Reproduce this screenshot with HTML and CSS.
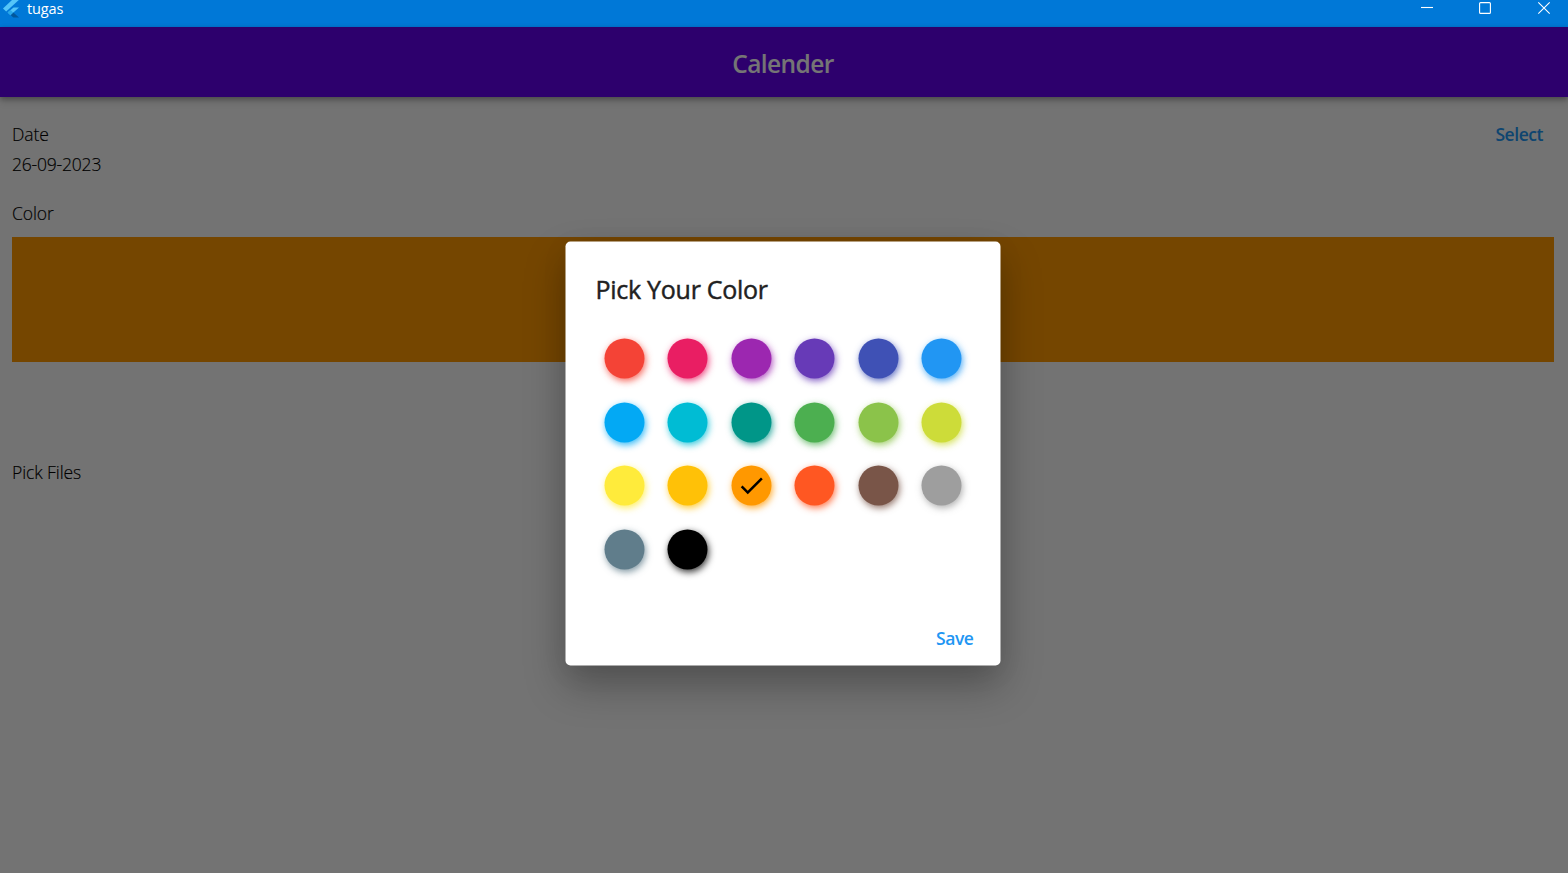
FILE: index.html
```html
<!DOCTYPE html>
<html lang="en">
<head>
<meta charset="utf-8">
<title>tugas</title>
<link rel="stylesheet" href="styles.css">
</head>
<body>
<header class="titlebar">
  <svg class="logo" width="18" height="18" viewBox="0 0 18 18"><path d="M10 0H16.8L4.2 11.4 1 8.4z" fill="#54c5f8"/><path d="M11.6 7.4H17L11.4 12.6 8.6 15.2 5.6 12.6z" fill="#54c5f8"/><path d="M8.6 15 11.3 12.6 17 17.4H11.3z" fill="#01579b"/><path d="M5.6 12.6 8.4 10.1 11.3 12.6 8.5 15.2z" fill="#29a8ea"/></svg>
  <span class="app-name">tugas</span>
  <div class="controls">
    <svg width="14" height="14" viewBox="0 0 14 14"><path d="M2 6.5H14"/></svg>
    <svg width="14" height="14" viewBox="0 0 14 14"><rect x="1.6" y="1.6" width="10.8" height="10.8" rx="1"/></svg>
    <svg width="14" height="14" viewBox="0 0 14 14"><path d="M1.3 1.3 12.7 12.7M12.7 1.3 1.3 12.7"/></svg>
  </div>
</header>
<div class="client">
  <div class="appbar"><h1 class="appbar-title">Calender</h1></div>
  <main class="content">
    <div class="date-row">
      <div><div class="label date-label">Date</div><div class="label date-value">26-09-2023</div></div>
      <button class="text-button select">Select</button>
    </div>
    <div class="label color-label">Color</div>
    <div class="swatch"></div>
    <div class="label files-label">Pick Files</div>
  </main>
  <div class="scrim">
    <section class="dialog">
      <h2 class="dialog-title">Pick Your Color</h2>
      <div class="palette">
        <i class="dot red"></i><i class="dot pink"></i><i class="dot purple"></i><i class="dot deep-purple"></i><i class="dot indigo"></i><i class="dot blue"></i>
        <i class="dot light-blue"></i><i class="dot cyan"></i><i class="dot teal"></i><i class="dot green"></i><i class="dot light-green"></i><i class="dot lime"></i>
        <i class="dot yellow"></i><i class="dot amber"></i><i class="dot orange"><svg width="30" height="30" viewBox="0 0 24 24"><path d="M9 16.17 4.83 12l-1.42 1.41L9 19 21 7l-1.41-1.41z"/></svg></i><i class="dot deep-orange"></i><i class="dot brown"></i><i class="dot grey"></i>
        <i class="dot blue-grey"></i><i class="dot black"></i>
      </div>
      <button class="text-button save">Save</button>
    </section>
  </div>
</div>
</body>
</html>
```
FILE: styles.css
```css
* { box-sizing: border-box; }
body {
  margin: 0;
  height: 873px;
  display: flex;
  flex-direction: column;
  overflow: hidden;
  font-family: "Open Sans", "Noto Sans", sans-serif;
}
h1, h2 { margin: 0; }
.titlebar {
  height: 27px;
  flex: none;
  display: flex;
  align-items: flex-start;
  background: #0078d7;
  color: #fff;
}
.logo { margin-left: 2px; }
.app-name { margin: -1px 0 0 7px; font-size: 14.5px; line-height: 20px; letter-spacing: -0.15px; }
.controls {
  margin: 1px 17px 0 auto;
  display: flex;
  gap: 45px;
  fill: none;
  stroke: #fff;
  stroke-width: 1.1;
}
.client { flex: 1; position: relative; background: #fafafa; }
.appbar {
  height: 70px;
  display: flex;
  align-items: center;
  justify-content: center;
  background: #6200ee;
  box-shadow: 0 2px 5px rgba(0, 0, 0, .25), 0 4px 8px rgba(0, 0, 0, .16);
}
.appbar-title { font-size: 24.5px; line-height: 34px; font-weight: 600; letter-spacing: -0.6px; color: #fff; padding: 4px 2px 0 0; }
.content { padding: 22px 14px 0 12px; }
.date-row { display: flex; justify-content: space-between; }
.label { font-size: 17.5px; line-height: 30px; font-weight: 300; letter-spacing: -0.08px; color: #000; -webkit-text-stroke: 0.15px; }
.date-value { letter-spacing: -0.2px; }
.text-button {
  border: 0;
  padding: 0;
  background: none;
  font: 600 17.5px/30px "Open Sans", "Noto Sans", sans-serif;
  letter-spacing: -0.45px;
  color: #2196f3;
}
.select { height: 30px; margin-right: 11px; }
.color-label { margin-top: 19px; }
.swatch { height: 125px; margin-top: 9px; background: #ff9800; }
.files-label { margin-top: 95px; }
.scrim { position: absolute; inset: 0; background: rgba(0, 0, 0, .54); }
.dialog {
  position: absolute;
  left: 566px;
  top: 215px;
  width: 435px;
  height: 424px;
  padding: 30px 27px 13px 30px;
  display: flex;
  flex-direction: column;
  border-radius: 5px;
  background: #fff;
  box-shadow: 0 20px 40px rgba(0, 0, 0, .28), 0 6px 28px rgba(0, 0, 0, .06);
  transform: translate(-0.5px, -0.5px);
}
.dialog-title { font-size: 25px; line-height: 34px; font-weight: 400; letter-spacing: -0.27px; color: #212121; -webkit-text-stroke: 0.45px; }
.palette {
  margin: 33px 0 0 9px;
  display: grid;
  grid-template-columns: repeat(6, 40px);
  grid-auto-rows: 40px;
  gap: 23.7px 23.4px;
}
.dot {
  display: flex;
  align-items: center;
  justify-content: center;
  border-radius: 50%;
  background: var(--c);
  box-shadow: 1.25px 2.5px 7.5px color-mix(in srgb, var(--c) 80%, transparent);
}
.red { --c: #f44336; }
.pink { --c: #e91e63; }
.purple { --c: #9c27b0; }
.deep-purple { --c: #673ab7; }
.indigo { --c: #3f51b5; }
.blue { --c: #2196f3; }
.light-blue { --c: #03a9f4; }
.cyan { --c: #00bcd4; }
.teal { --c: #009688; }
.green { --c: #4caf50; }
.light-green { --c: #8bc34a; }
.lime { --c: #cddc39; }
.yellow { --c: #ffeb3b; }
.amber { --c: #ffc107; }
.orange { --c: #ff9800; }
.deep-orange { --c: #ff5722; }
.brown { --c: #795548; }
.grey { --c: #9e9e9e; }
.blue-grey { --c: #607d8b; }
.black { --c: #000; }
.save { margin: auto 0 0 auto; }
```
